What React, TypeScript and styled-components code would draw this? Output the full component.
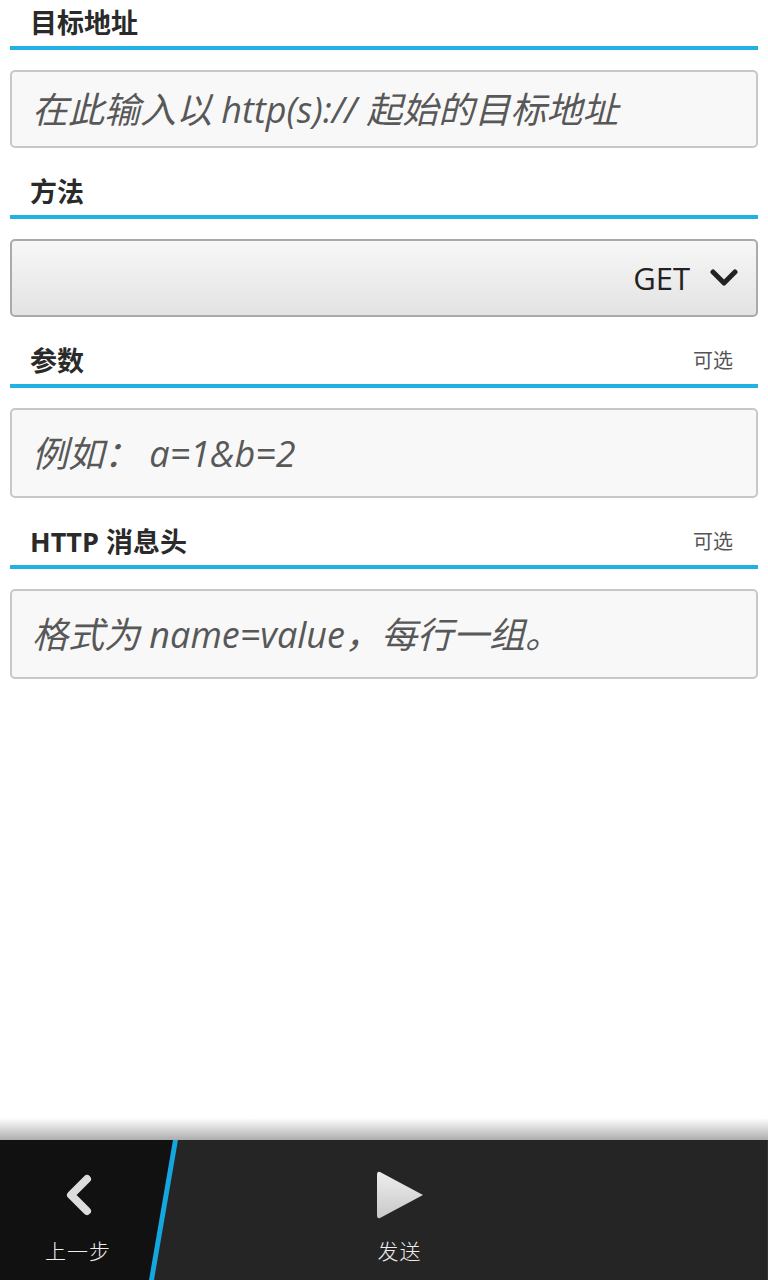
import React from "react";
import styled, { createGlobalStyle } from "styled-components";

const GlobalStyle = createGlobalStyle`
  html, body { margin: 0; padding: 0; background: #ffffff; }
  body { font-family: "Open Sans", "Noto Sans CJK SC", sans-serif; }
  * { box-sizing: border-box; }
`;

const Page = styled.div`
  min-height: 100vh;
  display: flex;
  flex-direction: column;
`;

const Form = styled.div`
  flex: 1;
  display: flex;
  flex-direction: column;
  padding: 0 10px;
`;

const Section = styled.section<{ $first?: boolean }>`
  display: flex;
  flex-direction: column;
  gap: 20px;
  margin-top: ${(p) => (p.$first ? "0" : "21px")};
`;

const Header = styled.div`
  height: 50px;
  display: flex;
  align-items: flex-end;
  justify-content: space-between;
  padding: 0 25px 7px 20px;
  border-bottom: 4px solid #1fb2e3;
`;

const Title = styled.h2`
  margin: 0;
  font-family: "Open Sans", "Noto Sans CJK SC", sans-serif;
  font-size: 27px;
  font-weight: 700;
  line-height: 32px;
  color: #2a2a2a;
`;

const Optional = styled.span`
  font-family: "Open Sans", "Noto Sans CJK SC", sans-serif;
  font-size: 20px;
  line-height: 26px;
  margin-bottom: 3px;
  color: #555;
`;

const Field = styled.input<{ $h: number }>`
  width: 100%;
  height: ${(p) => p.$h}px;
  border: 2px solid #c8c8c8;
  border-radius: 5px;
  background: #f8f8f8;
  padding: 0 0 0 20px;
  font-family: "Open Sans", "Noto Sans CJK SC", sans-serif;
  font-size: 36px;
  font-style: italic;
  font-weight: 400;
  color: #333;
  outline: none;
  &::placeholder {
    color: #585858;
    opacity: 1;
  }
`;

const Select = styled.button`
  width: 100%;
  height: 78px;
  border: 2px solid #aaaaaa;
  border-radius: 5px;
  background: linear-gradient(to bottom, #f7f7f7, #e3e3e3);
  display: flex;
  align-items: center;
  justify-content: flex-end;
  gap: 20px;
  padding: 0 18px 0 20px;
  font-family: "Open Sans", "Noto Sans CJK SC", sans-serif;
  font-size: 31px;
  color: #222;
  cursor: pointer;
`;

const Shade = styled.div`
  height: 22px;
  background: linear-gradient(to bottom, rgba(0, 0, 0, 0), rgba(0, 0, 0, 0.32));
`;

const ActionBar = styled.nav`
  height: 140px;
  display: flex;
  background: #252525;
  border-right: 1px solid #333;
`;

const BackAction = styled.div`
  position: relative;
  width: 178px;
  display: flex;
  flex-direction: column;
  align-items: center;
  padding-right: 22px;
  &::before {
    content: "";
    position: absolute;
    inset: 0;
    background: #111111;
    clip-path: polygon(0 0, 100% 0, calc(100% - 26px) 100%, 0 100%);
  }
  &::after {
    content: "";
    position: absolute;
    inset: 0;
    background: #14a6de;
    clip-path: polygon(calc(100% - 5px) 0, 100% 0, calc(100% - 24px) 100%, calc(100% - 29px) 100%);
  }
`;

const ActionArea = styled.div`
  flex: 1;
  display: flex;
  padding-right: 146px;
`;

const Action = styled.div`
  position: relative;
  z-index: 1;
  flex: 1;
  display: flex;
  flex-direction: column;
  align-items: center;
`;

const IconSlot = styled.div`
  position: relative;
  z-index: 1;
  height: 50px;
  margin-top: 30px;
  display: flex;
  align-items: center;
  justify-content: center;
`;

const ActionLabel = styled.span`
  position: relative;
  z-index: 1;
  margin-top: 15px;
  font-family: "Open Sans", "Noto Sans CJK SC", sans-serif;
  font-size: 21px;
  font-weight: 300;
  color: #eeeeee;
  letter-spacing: 1px;
`;

export default function App() {
  return (
    <Page>
      <GlobalStyle />
      <Form>
        <Section $first>
          <Header>
            <Title>目标地址</Title>
          </Header>
          <Field $h={78} placeholder="在此输入以 http(s):// 起始的目标地址" />
        </Section>
        <Section>
          <Header>
            <Title>方法</Title>
          </Header>
          <Select>
            <span>GET</span>
            <svg width="28" height="20" viewBox="0 0 28 20">
              <path d="M3 4 L14 15 L25 4" fill="none" stroke="#222" strokeWidth="5" strokeLinecap="round" strokeLinejoin="round" />
            </svg>
          </Select>
        </Section>
        <Section>
          <Header>
            <Title>参数</Title>
            <Optional>可选</Optional>
          </Header>
          <Field $h={90} placeholder="例如： a=1&b=2" />
        </Section>
        <Section>
          <Header>
            <Title>HTTP 消息头</Title>
            <Optional>可选</Optional>
          </Header>
          <Field $h={90} placeholder="格式为 name=value，每行一组。" />
        </Section>
      </Form>
      <Shade />
      <ActionBar>
        <BackAction>
          <IconSlot>
            <svg width="30" height="42" viewBox="0 0 30 42">
              <path d="M24 5 L8 21 L24 37" fill="none" stroke="#dddddd" strokeWidth="8" strokeLinecap="round" strokeLinejoin="round" />
            </svg>
          </IconSlot>
          <ActionLabel>上一步</ActionLabel>
        </BackAction>
        <ActionArea>
          <Action>
            <IconSlot>
              <svg width="48" height="50" viewBox="0 0 48 50">
                <defs>
                  <linearGradient id="play" x1="0" y1="0" x2="0" y2="1">
                    <stop offset="0" stopColor="#eeeeee" />
                    <stop offset="1" stopColor="#c8c8c8" />
                  </linearGradient>
                </defs>
                <path d="M4 2 Q1 1 1 5 L1 45 Q1 49 4 48 L47 25 Z" fill="url(#play)" />
              </svg>
            </IconSlot>
            <ActionLabel>发送</ActionLabel>
          </Action>
        </ActionArea>
      </ActionBar>
    </Page>
  );
}
